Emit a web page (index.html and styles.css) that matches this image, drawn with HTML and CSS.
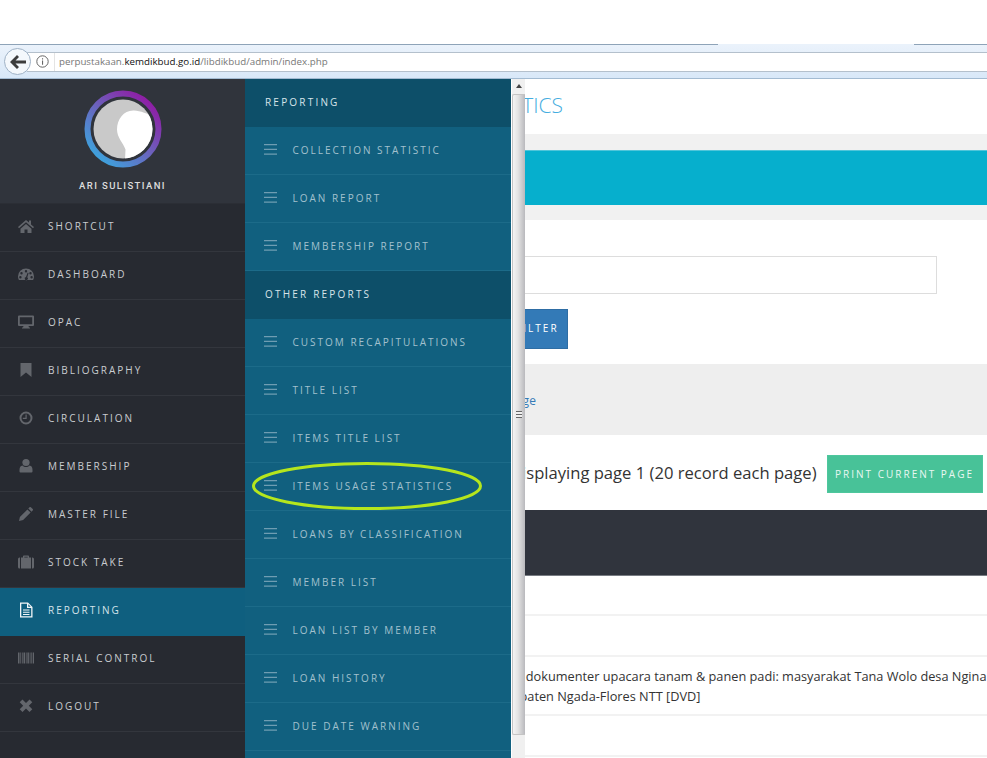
FILE: index.html
```html
<!DOCTYPE html>
<html lang="en">
<head>
  <meta charset="UTF-8" />
  <title>Items Usage Statistics</title>
  <link rel="stylesheet" href="styles.css">
</head>
<body>
  <svg class="sprites" width="0" height="0">
    <symbol id="i-home" viewBox="0 0 16 16"><path d="M8 2 0 9l1 1.2L8 4.2l7 6 1-1.200-3-2.600V2.500h-2v2.100zM2.500 10.800V15h4v-3.500h3V15h4v-4.200L8 6z"/></symbol>
    <symbol id="i-dash" viewBox="0 0 16 16"><path d="M8 2.500A8 8 0 0 0 0 10.500c0 1.300.3 2.500.9 3.500h14.200c.6-1 .9-2.200.9-3.500a8 8 0 0 0-8-8zM8 4a1.200 1.200 0 1 1 0 2.400A1.200 1.200 0 0 1 8 4zM3.500 6a1.200 1.200 0 1 1 0 2.400 1.200 1.200 0 0 1 0-2.400zm9 0a1.200 1.200 0 1 1 0 2.400 1.200 1.200 0 0 1 0-2.400zM2.400 10a1.200 1.200 0 1 1 0 2.400 1.200 1.200 0 0 1 0-2.400zm11.200 0a1.200 1.200 0 1 1 0 2.400 1.200 1.200 0 0 1 0-2.400zM10.600 7 9.300 11.200a1.600 1.600 0 1 1-1.300-.3L9.600 6.700z" fill-rule="evenodd"/></symbol>
    <symbol id="i-desktop" viewBox="0 0 16 16"><path d="M1 1.500h14a1 1 0 0 1 1 1V11a1 1 0 0 1-1 1h-4.500l.5 1.500h1V14.500H4V13.500h1l.5-1.500H1a1 1 0 0 1-1-1V2.500a1 1 0 0 1 1-1zm.8 1.800v6.900h12.400V3.300z" fill-rule="evenodd"/></symbol>
    <symbol id="i-bookmark" viewBox="0 0 16 16"><path d="M2.500 1h11v14L8 10.500 2.500 15z"/></symbol>
    <symbol id="i-clock" viewBox="0 0 16 16"><path d="M8 1.500a6.500 6.500 0 1 0 0 13 6.500 6.500 0 0 0 0-13zm0 2a4.500 4.500 0 1 1 0 9 4.500 4.500 0 0 1 0-9zM7.500 4.500h1.200V9H4.800V7.800h2.700z" fill-rule="evenodd"/></symbol>
    <symbol id="i-user" viewBox="0 0 16 16"><circle cx="8" cy="4.500" r="3.600"/><path d="M4.500 7.500C5.500 8.500 6.700 9 8 9s2.500-.5 3.500-1.500c2 .3 3 1.800 3 4.500v1.500a1 1 0 0 1-1 1h-11a1 1 0 0 1-1-1V12c0-2.700 1-4.200 3-4.500z"/></symbol>
    <symbol id="i-pencil" viewBox="0 0 16 16"><path d="M11.500 1.300a1 1 0 0 1 1.400 0l1.800 1.800a1 1 0 0 1 0 1.400L13.500 5.700l-3.200-3.200zM9.400 3.400l3.200 3.200-7.500 7.500L1 15l.9-4.100z"/></symbol>
    <symbol id="i-case" viewBox="0 0 16 16"><path d="M5 3.500V2.200C5 1.700 5.500 1.500 6 1.500h4c.5 0 1 .2 1 .7v1.300h-1.300V2.800H6.300v.7zM0 5a1.500 1.500 0 0 1 1.500-1.500h.5V14.500h-.5A1.500 1.500 0 0 1 0 13zM3 3.500h10V14.500H3zM14 3.500h.5A1.500 1.500 0 0 1 16 5v8a1.500 1.500 0 0 1-1.500 1.500H14z"/></symbol>
    <symbol id="i-barcode" viewBox="0 0 16 16"><path d="M0 2.500h1.500v11H0zM2.300 2.500h.8v11h-.8zM3.900 2.500h.8v11h-.8zM5.500 2.500h1.500v11H5.500zM7.800 2.500h.8v11h-.8zM9.400 2.500h1.500v11H9.400zM11.700 2.500h.8v11h-.8zM13.300 2.500h.8v11h-.8zM14.800 2.500H16v11h-1.200z"/></symbol>
    <symbol id="i-times" viewBox="0 0 16 16"><path d="M4.500 2.500 8 6l3.500-3.500 2.800 2.800L10.800 8.800l3.500 3.500-2.800 2.700L8 11.500 4.500 15l-2.800-2.700 3.500-3.500-3.500-3.500z" transform="translate(0 -1)"/></symbol>
    <symbol id="i-file" viewBox="0 0 16 16"><path d="M2 .5h8L14.500 5v10.500H2zM3.300 1.800v12.400h9.900V6H9V1.800zM10.300 2.300V4.700h2.400zM5 7.500h6.500v1.100H5zM5 9.700h6.500v1.100H5zM5 11.900h6.500V13H5z" fill-rule="evenodd"/></symbol>
    <symbol id="i-bars" viewBox="0 0 13 11"><path d="M0 0h13v1.300H0zM0 4.700h13V6H0zM0 9.400h13v1.300H0z"/></symbol>
  </svg>

  <div class="top-gap"></div>

  <div class="browser-bar">
    <div class="back-btn">
      <svg width="16" height="14" viewBox="0 0 16 14"><path d="M7 0 0 7l7 7 2-2-3.500-3.500H16v-3H5.500L9 2z"/></svg>
    </div>
    <div class="url-box">
      <svg class="info" width="13" height="13" viewBox="0 0 13 13"><circle cx="6.500" cy="6.500" r="5.700" fill="none" stroke="#666"/><path d="M6 5.500h1.100v4.200H6zM6 3.200h1.100v1.200H6z" fill="#666"/></svg>
      <span class="url">perpustakaan.<b>kemdikbud.go.id</b>/libdikbud/admin/index.php</span>
    </div>
  </div>

  <div class="shell">
    <nav class="sidebar">
      <div class="profile">
        <svg class="avatar" width="78" height="78" viewBox="0 0 78 78">
          <defs>
            <linearGradient id="ring" x1="0.85" y1="0.1" x2="0.15" y2="0.9">
              <stop offset="0" stop-color="#8e1fa5"/>
              <stop offset="0.5" stop-color="#6b62bd"/>
              <stop offset="1" stop-color="#3fa0dc"/>
            </linearGradient>
            <clipPath id="face"><circle cx="39" cy="39" r="29.500"/></clipPath>
          </defs>
          <circle cx="39" cy="39" r="35.500" fill="none" stroke="url(#ring)" stroke-width="6"/>
          <circle cx="39" cy="39" r="29.500" fill="#c9c9c9"/>
          <path clip-path="url(#face)" d="M50 20.500C40 20 33 29 33 39.500c0 8 6 13 8.500 20L41 70H72V30C68 25 58 21 50 20.500z" fill="#fff"/>
        </svg>
        <div class="profile-name">ARI SULISTIANI</div>
      </div>
      <a class="nav-item"><svg class="nav-icon"><use href="#i-home"/></svg>SHORTCUT</a>
      <a class="nav-item"><svg class="nav-icon"><use href="#i-dash"/></svg>DASHBOARD</a>
      <a class="nav-item"><svg class="nav-icon"><use href="#i-desktop"/></svg>OPAC</a>
      <a class="nav-item"><svg class="nav-icon"><use href="#i-bookmark"/></svg>BIBLIOGRAPHY</a>
      <a class="nav-item"><svg class="nav-icon"><use href="#i-clock"/></svg>CIRCULATION</a>
      <a class="nav-item"><svg class="nav-icon"><use href="#i-user"/></svg>MEMBERSHIP</a>
      <a class="nav-item"><svg class="nav-icon"><use href="#i-pencil"/></svg>MASTER FILE</a>
      <a class="nav-item"><svg class="nav-icon"><use href="#i-case"/></svg>STOCK TAKE</a>
      <a class="nav-item active"><svg class="nav-icon"><use href="#i-file"/></svg>REPORTING</a>
      <a class="nav-item"><svg class="nav-icon"><use href="#i-barcode"/></svg>SERIAL CONTROL</a>
      <a class="nav-item"><svg class="nav-icon"><use href="#i-times"/></svg>LOGOUT</a>
    </nav>

    <main class="content">
      <h1 class="page-title">USAGE STATISTICS</h1>
      <div class="grey-band">
        <div class="teal-bar"></div>
      </div>
      <div class="filter-form">
        <div class="text-field"></div>
        <button class="filter-btn">APPLY FILTER</button>
      </div>
      <div class="link-band"><a class="page-link">Full Page</a></div>
      <div class="pager-row">
        <span class="pager-text">Displaying page 1 (20 record each page)</span>
        <button class="print-btn">PRINT CURRENT PAGE</button>
      </div>
      <div class="table-head"></div>
      <div class="table-row row-a"></div>
      <div class="table-row row-b"></div>
      <div class="table-row row-c">Video dokumenter upacara tanam &amp; panen padi: masyarakat Tana Wolo desa Ngina<br>Kabupaten Ngada-Flores NTT [DVD]</div>
      <div class="table-row row-b"></div>
    </main>

    <aside class="submenu">
      <div class="sub-head">REPORTING</div>
      <a class="sub-item"><svg class="bars"><use href="#i-bars"/></svg>COLLECTION STATISTIC</a>
      <a class="sub-item"><svg class="bars"><use href="#i-bars"/></svg>LOAN REPORT</a>
      <a class="sub-item"><svg class="bars"><use href="#i-bars"/></svg>MEMBERSHIP REPORT</a>
      <div class="sub-head">OTHER REPORTS</div>
      <a class="sub-item"><svg class="bars"><use href="#i-bars"/></svg>CUSTOM RECAPITULATIONS</a>
      <a class="sub-item"><svg class="bars"><use href="#i-bars"/></svg>TITLE LIST</a>
      <a class="sub-item"><svg class="bars"><use href="#i-bars"/></svg>ITEMS TITLE LIST</a>
      <a class="sub-item"><svg class="bars"><use href="#i-bars"/></svg>ITEMS USAGE STATISTICS</a>
      <a class="sub-item"><svg class="bars"><use href="#i-bars"/></svg>LOANS BY CLASSIFICATION</a>
      <a class="sub-item"><svg class="bars"><use href="#i-bars"/></svg>MEMBER LIST</a>
      <a class="sub-item"><svg class="bars"><use href="#i-bars"/></svg>LOAN LIST BY MEMBER</a>
      <a class="sub-item"><svg class="bars"><use href="#i-bars"/></svg>LOAN HISTORY</a>
      <a class="sub-item"><svg class="bars"><use href="#i-bars"/></svg>DUE DATE WARNING</a>
    </aside>

    <div class="scrollbar">
      <div class="scroll-up"></div>
      <div class="scroll-thumb"><span class="grip"></span></div>
    </div>

    <svg class="highlight" width="240" height="56" viewBox="0 0 240 56">
      <ellipse cx="120" cy="28" rx="113.500" ry="22.500" fill="none" stroke="#b5e61d" stroke-width="3"/>
    </svg>
  </div>
</body>
</html>
```

FILE: styles.css
```css
* {
  box-sizing: border-box;
}
body {
  margin: 0;
  height: 758px;
  overflow: hidden;
  background: #fff;
  font-family: "Open Sans", Arial, sans-serif;
  color: #333;
}
.sprites {
  position: absolute;
}

.top-gap {
  height: 44px;
}

/* browser chrome */
.browser-bar {
  position: relative;
  height: 35px;
  display: flex;
  align-items: center;
  padding: 0 0 0 4px;
  background: linear-gradient(#eaf2fb, #d9e8f8);
  border-top: 1px solid #8ea3b8;
  border-bottom: 1px solid #a3bbd2;
}
/* the active tab breaks the top line */
.browser-bar::before {
  content: "";
  position: absolute;
  left: 718px;
  top: -1px;
  width: 196px;
  height: 1px;
  background: #eaf2fb;
}
.back-btn {
  width: 27px;
  height: 27px;
  flex: none;
  border-radius: 50%;
  border: 1px solid #9fb2c6;
  background: #f4f8fc;
  display: flex;
  align-items: center;
  justify-content: center;
  margin-right: -4px;
  z-index: 1;
}
.back-btn svg {
  fill: #3c3c3c;
}
.url-box {
  flex: 1;
  height: 20px;
  display: flex;
  align-items: center;
  background: #fff;
  border-top: 1px solid #b4c0cc;
  border-bottom: 1px solid #b4c0cc;
  padding-left: 9px;
}
.info {
  margin-right: 5px;
  flex: none;
}
.url {
  border-left: 1px solid #e4e4e4;
  padding-left: 4px;
  font-size: 9.75px;
  line-height: 18px;
  color: #777;
}
.url b {
  font-weight: 400;
  color: #111;
}

.shell {
  position: relative;
  display: flex;
  height: 679px;
  overflow: hidden;
}

/* left nav */
.sidebar {
  width: 245px;
  flex: none;
  background: #272a31;
}
.profile {
  height: 125px;
  background: #30343c;
  border-bottom: 1px solid #2b2e35;
  padding-top: 11px;
  text-align: center;
}
.avatar {
  display: block;
  margin: 0 auto;
}
.profile-name {
  margin-top: 12px;
  font-family: Roboto, Arial, sans-serif;
  font-size: 9.5px;
  font-weight: 500;
  letter-spacing: 1.4px;
  color: #ddd;
}
.nav-item {
  height: 48px;
  display: flex;
  align-items: center;
  padding-left: 18px;
  padding-bottom: 3px;
  border-bottom: 1px solid #33363d;
  font-size: 10px;
  letter-spacing: 2px;
  color: #c9ccd0;
}
.nav-item.active {
  background: #0f5f7f;
  border-bottom: none;
  padding-bottom: 4px;
  color: #d5e3ea;
}
.nav-icon {
  width: 16px;
  height: 16px;
  margin-right: 14px;
  fill: #63666c;
  flex: none;
}
.nav-item.active .nav-icon {
  fill: #f2f6f8;
}

/* main page under the submenu */
.content {
  flex: 1;
  min-width: 0;
  white-space: nowrap;
}
.page-title {
  margin: 0;
  height: 55px;
  padding-left: 143px;
  font-size: 21px;
  font-weight: 300;
  line-height: 52px;
  color: #45ade0;
}
.grey-band {
  height: 86px;
  padding: 16px 0 15px;
  background: #f1f1f1;
}
.teal-bar {
  height: 55px;
  background: #06afcd;
  border-top: 1px solid #4fc5da;
}
.filter-form {
  height: 144px;
  padding: 36px 0 0 20px;
}
.text-field {
  width: 672px;
  height: 38px;
  border: 1px solid #ddd;
}
.filter-btn {
  display: block;
  margin: 15px 0 0 192px;
  width: 111px;
  height: 40px;
  background: #337ab7;
  border: 1px solid #2e6da4;
  font-family: inherit;
  font-size: 10px;
  letter-spacing: 2px;
  color: #fff;
  padding: 0 0 2px 6px;
}
.link-band {
  height: 71px;
  padding: 24px 0 0 241px;
  background: #eee;
}
.page-link {
  font-size: 12px;
  color: #337ab7;
}
.pager-row {
  height: 75px;
  display: flex;
  align-items: center;
  padding: 3px 0 0 265px;
}
.pager-text {
  font-size: 16.6px;
  margin: 0 10px 3px 0;
}
.print-btn {
  width: 156px;
  height: 38px;
  flex: none;
  background: #48c298;
  border: 1px solid #4ec79d;
  font-family: inherit;
  font-size: 10px;
  letter-spacing: 2px;
  color: #e8f7f2;
  padding: 0;
}
.table-head {
  height: 66px;
  background: #30343d;
  border-bottom: 1px solid #777b82;
}
.table-row {
  border-bottom: 2px solid #f2f2f2;
  font-size: 12.75px;
  line-height: 20px;
}
.row-a {
  height: 40px;
}
.row-b {
  height: 41px;
}
.row-c {
  height: 59px;
  padding: 9px 0 0 244px;
}

/* submenu and its scrollbar sit over the page */
.submenu {
  position: absolute;
  left: 245px;
  top: 0;
  bottom: 0;
  width: 266px;
  background: #11607f;
  overflow: hidden;
}
.sub-head {
  height: 48px;
  display: flex;
  align-items: center;
  padding-left: 20px;
  padding-bottom: 2px;
  background: #0d4f69;
  font-size: 10px;
  letter-spacing: 2.2px;
  color: #d8e4ea;
}
.sub-item {
  height: 48px;
  display: flex;
  align-items: center;
  padding-left: 19px;
  padding-bottom: 2px;
  border-bottom: 1px solid #1c6b89;
  font-size: 10px;
  letter-spacing: 2px;
  color: #a2c0ce;
}
.bars {
  width: 13px;
  height: 11px;
  margin-right: 15.500px;
  fill: #6f9db2;
  flex: none;
}
.scrollbar {
  position: absolute;
  left: 511px;
  top: 0;
  bottom: 0;
  width: 14px;
  background: #f0f0f0;
  border-left: 1px solid #fff;
}
.scroll-up {
  height: 15px;
  position: relative;
}
.scroll-up::after {
  content: "";
  position: absolute;
  left: 4px;
  top: 5px;
  border: 3px solid transparent;
  border-top: 0;
  border-bottom: 4px solid #444;
}
.scroll-thumb {
  height: 641px;
  display: flex;
  align-items: center;
  justify-content: center;
  background: linear-gradient(to right, #f4f4f4, #e4e4e4 40%, #b9b9bd);
  border: 1px solid #c4c4c4;
  border-right: none;
  border-radius: 2px 0 0 2px;
}
.grip {
  width: 6px;
  height: 7px;
  border-top: 1px solid #666;
  border-bottom: 1px solid #666;
  background: linear-gradient(#f0f0f0 2px, #666 2px, #666 3px, #f0f0f0 3px);
}
.highlight {
  position: absolute;
  left: 247px;
  top: 379px;
}
```
